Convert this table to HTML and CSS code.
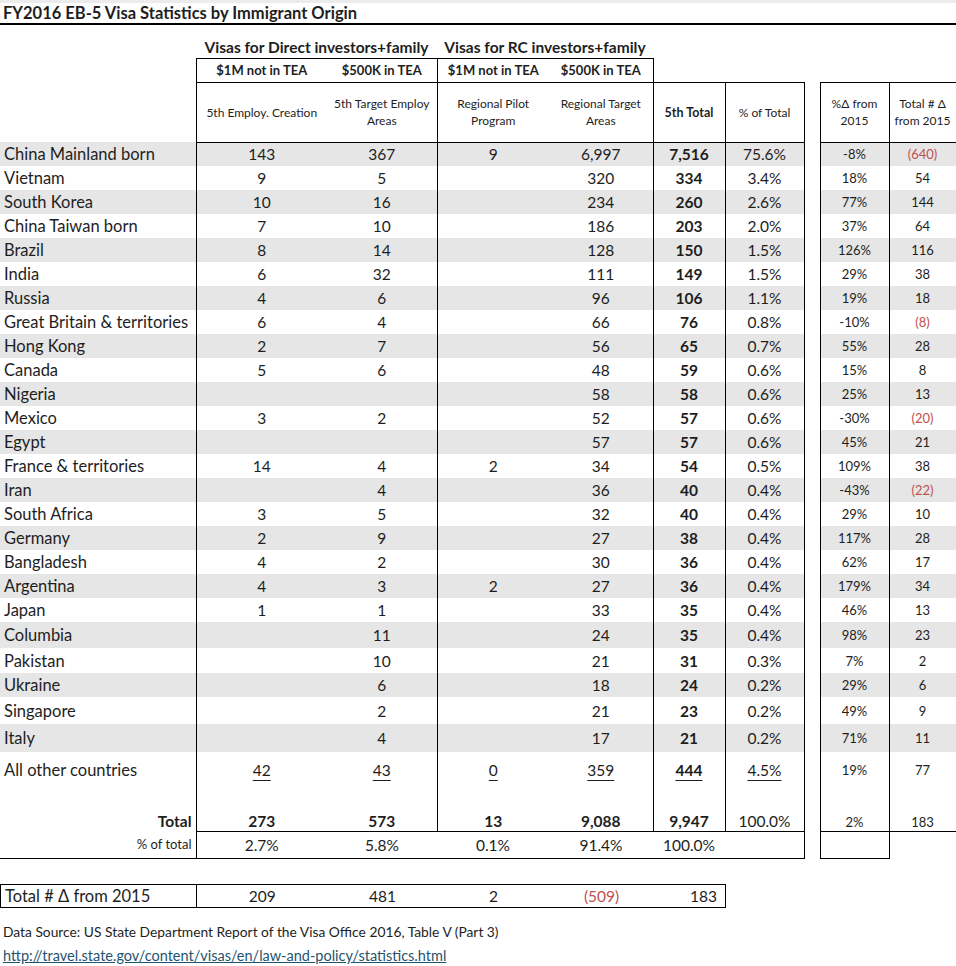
FILE: index.html
```html
<!DOCTYPE html>
<html lang="en">
<head>
<meta charset="utf-8">
<title>FY2016 EB-5 Visa Statistics by Immigrant Origin</title>
<link rel="stylesheet" href="styles.css">
</head>
<body>
<div class="topstrip"></div>
<h1 class="title">FY2016 EB-5 Visa Statistics by Immigrant Origin</h1>
<table class="sheet">
  <colgroup>
    <col class="c-label"><col class="c-d1"><col class="c-d2"><col class="c-r1"><col class="c-r2"><col class="c-tot"><col class="c-pct"><col class="c-gap"><col class="c-dp"><col class="c-dn">
  </colgroup>
  <tr class="r-group">
    <td></td>
    <td colspan="2" class="grp">Visas for Direct investors+family</td>
    <td colspan="2" class="grp">Visas for RC investors+family</td>
    <td></td><td></td><td></td><td></td><td></td>
  </tr>
  <tr class="r-amt">
    <td></td>
    <td class="amt bl bt bb">$1M not in TEA</td>
    <td class="amt bt bb">$500K in TEA</td>
    <td class="amt bl bt bb">$1M not in TEA</td>
    <td class="amt bt bb br">$500K in TEA</td>
    <td></td><td></td><td></td><td></td><td></td>
  </tr>
  <tr class="r-sub">
    <td></td>
    <td class="sub bl bb">5th Employ. Creation</td>
    <td class="sub bb">5th Target Employ Areas</td>
    <td class="sub bl bb">Regional Pilot Program</td>
    <td class="sub bb">Regional Target Areas</td>
    <td class="sub strong bl bt bb">5th Total</td>
    <td class="sub bl bt bb br">% of Total</td>
    <td></td>
    <td class="sub bl bt bb">%Δ from 2015</td>
    <td class="sub bl bt bb br">Total # Δ from 2015</td>
  </tr>
  <tr class="d g"><td class="lab">China Mainland born</td><td class="n bl">143</td><td class="n">367</td><td class="n bl">9</td><td class="n">6,997</td><td class="n b bl">7,516</td><td class="n bl br">75.6%</td><td class="gap"></td><td class="s bl">-8%</td><td class="s bl br neg">(640)</td></tr>
  <tr class="d"><td class="lab">Vietnam</td><td class="n bl">9</td><td class="n">5</td><td class="n bl"></td><td class="n">320</td><td class="n b bl">334</td><td class="n bl br">3.4%</td><td class="gap"></td><td class="s bl">18%</td><td class="s bl br">54</td></tr>
  <tr class="d g"><td class="lab">South Korea</td><td class="n bl">10</td><td class="n">16</td><td class="n bl"></td><td class="n">234</td><td class="n b bl">260</td><td class="n bl br">2.6%</td><td class="gap"></td><td class="s bl">77%</td><td class="s bl br">144</td></tr>
  <tr class="d"><td class="lab">China Taiwan born</td><td class="n bl">7</td><td class="n">10</td><td class="n bl"></td><td class="n">186</td><td class="n b bl">203</td><td class="n bl br">2.0%</td><td class="gap"></td><td class="s bl">37%</td><td class="s bl br">64</td></tr>
  <tr class="d g"><td class="lab">Brazil</td><td class="n bl">8</td><td class="n">14</td><td class="n bl"></td><td class="n">128</td><td class="n b bl">150</td><td class="n bl br">1.5%</td><td class="gap"></td><td class="s bl">126%</td><td class="s bl br">116</td></tr>
  <tr class="d"><td class="lab">India</td><td class="n bl">6</td><td class="n">32</td><td class="n bl"></td><td class="n">111</td><td class="n b bl">149</td><td class="n bl br">1.5%</td><td class="gap"></td><td class="s bl">29%</td><td class="s bl br">38</td></tr>
  <tr class="d g"><td class="lab">Russia</td><td class="n bl">4</td><td class="n">6</td><td class="n bl"></td><td class="n">96</td><td class="n b bl">106</td><td class="n bl br">1.1%</td><td class="gap"></td><td class="s bl">19%</td><td class="s bl br">18</td></tr>
  <tr class="d"><td class="lab">Great Britain &amp; territories</td><td class="n bl">6</td><td class="n">4</td><td class="n bl"></td><td class="n">66</td><td class="n b bl">76</td><td class="n bl br">0.8%</td><td class="gap"></td><td class="s bl">-10%</td><td class="s bl br neg">(8)</td></tr>
  <tr class="d g"><td class="lab">Hong Kong</td><td class="n bl">2</td><td class="n">7</td><td class="n bl"></td><td class="n">56</td><td class="n b bl">65</td><td class="n bl br">0.7%</td><td class="gap"></td><td class="s bl">55%</td><td class="s bl br">28</td></tr>
  <tr class="d"><td class="lab">Canada</td><td class="n bl">5</td><td class="n">6</td><td class="n bl"></td><td class="n">48</td><td class="n b bl">59</td><td class="n bl br">0.6%</td><td class="gap"></td><td class="s bl">15%</td><td class="s bl br">8</td></tr>
  <tr class="d g"><td class="lab">Nigeria</td><td class="n bl"></td><td class="n"></td><td class="n bl"></td><td class="n">58</td><td class="n b bl">58</td><td class="n bl br">0.6%</td><td class="gap"></td><td class="s bl">25%</td><td class="s bl br">13</td></tr>
  <tr class="d"><td class="lab">Mexico</td><td class="n bl">3</td><td class="n">2</td><td class="n bl"></td><td class="n">52</td><td class="n b bl">57</td><td class="n bl br">0.6%</td><td class="gap"></td><td class="s bl">-30%</td><td class="s bl br neg">(20)</td></tr>
  <tr class="d g"><td class="lab">Egypt</td><td class="n bl"></td><td class="n"></td><td class="n bl"></td><td class="n">57</td><td class="n b bl">57</td><td class="n bl br">0.6%</td><td class="gap"></td><td class="s bl">45%</td><td class="s bl br">21</td></tr>
  <tr class="d"><td class="lab">France &amp; territories</td><td class="n bl">14</td><td class="n">4</td><td class="n bl">2</td><td class="n">34</td><td class="n b bl">54</td><td class="n bl br">0.5%</td><td class="gap"></td><td class="s bl">109%</td><td class="s bl br">38</td></tr>
  <tr class="d g"><td class="lab">Iran</td><td class="n bl"></td><td class="n">4</td><td class="n bl"></td><td class="n">36</td><td class="n b bl">40</td><td class="n bl br">0.4%</td><td class="gap"></td><td class="s bl">-43%</td><td class="s bl br neg">(22)</td></tr>
  <tr class="d"><td class="lab">South Africa</td><td class="n bl">3</td><td class="n">5</td><td class="n bl"></td><td class="n">32</td><td class="n b bl">40</td><td class="n bl br">0.4%</td><td class="gap"></td><td class="s bl">29%</td><td class="s bl br">10</td></tr>
  <tr class="d g"><td class="lab">Germany</td><td class="n bl">2</td><td class="n">9</td><td class="n bl"></td><td class="n">27</td><td class="n b bl">38</td><td class="n bl br">0.4%</td><td class="gap"></td><td class="s bl">117%</td><td class="s bl br">28</td></tr>
  <tr class="d"><td class="lab">Bangladesh</td><td class="n bl">4</td><td class="n">2</td><td class="n bl"></td><td class="n">30</td><td class="n b bl">36</td><td class="n bl br">0.4%</td><td class="gap"></td><td class="s bl">62%</td><td class="s bl br">17</td></tr>
  <tr class="d g"><td class="lab">Argentina</td><td class="n bl">4</td><td class="n">3</td><td class="n bl">2</td><td class="n">27</td><td class="n b bl">36</td><td class="n bl br">0.4%</td><td class="gap"></td><td class="s bl">179%</td><td class="s bl br">34</td></tr>
  <tr class="d"><td class="lab">Japan</td><td class="n bl">1</td><td class="n">1</td><td class="n bl"></td><td class="n">33</td><td class="n b bl">35</td><td class="n bl br">0.4%</td><td class="gap"></td><td class="s bl">46%</td><td class="s bl br">13</td></tr>
  <tr class="d g h26"><td class="lab">Columbia</td><td class="n bl"></td><td class="n">11</td><td class="n bl"></td><td class="n">24</td><td class="n b bl">35</td><td class="n bl br">0.4%</td><td class="gap"></td><td class="s bl">98%</td><td class="s bl br">23</td></tr>
  <tr class="d h25"><td class="lab">Pakistan</td><td class="n bl"></td><td class="n">10</td><td class="n bl"></td><td class="n">21</td><td class="n b bl">31</td><td class="n bl br">0.3%</td><td class="gap"></td><td class="s bl">7%</td><td class="s bl br">2</td></tr>
  <tr class="d g"><td class="lab">Ukraine</td><td class="n bl"></td><td class="n">6</td><td class="n bl"></td><td class="n">18</td><td class="n b bl">24</td><td class="n bl br">0.2%</td><td class="gap"></td><td class="s bl">29%</td><td class="s bl br">6</td></tr>
  <tr class="d h27"><td class="lab">Singapore</td><td class="n bl"></td><td class="n">2</td><td class="n bl"></td><td class="n">21</td><td class="n b bl">23</td><td class="n bl br">0.2%</td><td class="gap"></td><td class="s bl">49%</td><td class="s bl br">9</td></tr>
  <tr class="d g h28"><td class="lab">Italy</td><td class="n bl"></td><td class="n">4</td><td class="n bl"></td><td class="n">17</td><td class="n b bl">21</td><td class="n bl br">0.2%</td><td class="gap"></td><td class="s bl">71%</td><td class="s bl br">11</td></tr>
  <tr class="d r-other"><td class="lab">All other countries</td><td class="n bl"><u>42</u></td><td class="n"><u>43</u></td><td class="n bl"><u>0</u></td><td class="n"><u>359</u></td><td class="n b bl"><u>444</u></td><td class="n bl br"><u>4.5%</u></td><td class="gap"></td><td class="s bl">19%</td><td class="s bl br">77</td></tr>
  <tr class="d r-total"><td class="lab tot-lab">Total</td><td class="n b bl bb">273</td><td class="n b bb">573</td><td class="n b bl bb">13</td><td class="n b bb">9,088</td><td class="n b bl bb">9,947</td><td class="n bl br bb">100.0%</td><td class="gap"></td><td class="s bl bb">2%</td><td class="s bl br bb">183</td></tr>
  <tr class="d r-pct"><td class="pct-lab bb">% of total</td><td class="n bl bb">2.7%</td><td class="n bb">5.8%</td><td class="n bb">0.1%</td><td class="n bb">91.4%</td><td class="n bb">100.0%</td><td class="n br bb"></td><td class="gap"></td><td class="s bl br bb"></td><td></td></tr>
</table>

<table class="delta">
  <colgroup>
    <col class="c-label"><col class="c-d1"><col class="c-d2"><col class="c-r1"><col class="c-r2"><col class="c-tot">
  </colgroup>
  <tr>
    <td class="lab">Total # Δ from 2015</td>
    <td class="n bl">209</td>
    <td class="n">481</td>
    <td class="n">2</td>
    <td class="n neg">(509)</td>
    <td class="n right">183</td>
  </tr>
</table>

<p class="source">Data Source: US State Department Report of the Visa Office 2016, Table V (Part 3)</p>
<p class="link"><a href="#">http://travel.state.gov/content/visas/en/law-and-policy/statistics.html</a></p>
</body>
</html>
```
FILE: styles.css
```css
html, body {
  margin: 0;
  padding: 0;
  background: #fff;
}
body {
  font-family: "Lato", "Open Sans", sans-serif;
  color: #1e1e1e;
  width: 956px;
}
.topstrip {
  height: 3px;
  background: #ececec;
}
.title {
  margin: 0;
  height: 20px;
  padding-left: 3px;
  font-size: 16.5px;
  line-height: 20px;
  font-weight: 700;
  border-bottom: 2px solid #000;
}
.sheet, .delta {
  border-collapse: collapse;
  table-layout: fixed;
}
.sheet { width: 956px; }
.delta { width: 726px; margin-top: 25px; border: 1px solid #000; }
.c-label { width: 196px; }
.c-d1 { width: 131px; }
.c-d2 { width: 110px; }
.c-r1 { width: 112px; }
.c-r2 { width: 104px; }
.c-tot { width: 72px; }
.c-pct { width: 79px; }
.c-gap { width: 16px; }
.c-dp { width: 69px; }
.c-dn { width: 67px; }

td {
  padding: 0;
  text-align: center;
  vertical-align: middle;
  white-space: nowrap;
}
.bl { border-left: 1px solid #000; }
.br { border-right: 1px solid #000; }
.bt { border-top: 1px solid #000; }
.bb { border-bottom: 1px solid #000; }

.r-group { height: 33px; }
.grp {
  font-size: 15.5px;
  font-weight: 700;
  vertical-align: bottom;
  padding-bottom: 2px;
}
.r-amt { height: 24px; }
.amt {
  font-size: 13px;
  font-weight: 700;
}
.r-sub { height: 60px; }
.sub {
  font-size: 12px;
  line-height: 17px;
  white-space: normal;
  padding: 0 5px;
}
.strong { font-weight: 700; font-size: 12.5px; }

.d { height: 24px; }
.d.h25 { height: 25px; }
.d.h26 { height: 26px; }
.d.h27 { height: 27px; }
.d.h28 { height: 28px; }
.d.g td { background: #e6e6e6; }
.d.g td.gap { background: #fff; }
.lab {
  text-align: left;
  padding-left: 4px;
  font-size: 16.5px;
  overflow: hidden;
}
.n { font-size: 15.5px; }
.b { font-weight: 700; }
.s { font-size: 13px; }
.neg { color: #c0504d; }
.right { text-align: right; padding-right: 8px; }
u { text-underline-offset: 4px; text-decoration-thickness: 1px; }

.r-other { height: 36px; }
.r-total { height: 43px; }
.r-total td { vertical-align: bottom; padding-bottom: 1px; }
.tot-lab { text-align: right; padding-right: 4px; font-weight: 700; font-size: 15.5px; }
.r-pct { height: 27px; }
.pct-lab {
  text-align: right;
  padding-right: 4px;
  font-size: 13px;
}

.delta tr { height: 23px; }

.source {
  margin: 14px 0 0 3px;
  font-size: 13.8px;
  line-height: 20px;
}
.link {
  margin: 4px 0 0 3px;
  font-size: 14.5px;
  line-height: 20px;
}
.link a {
  color: #1f5470;
  text-decoration: underline;
}
```
